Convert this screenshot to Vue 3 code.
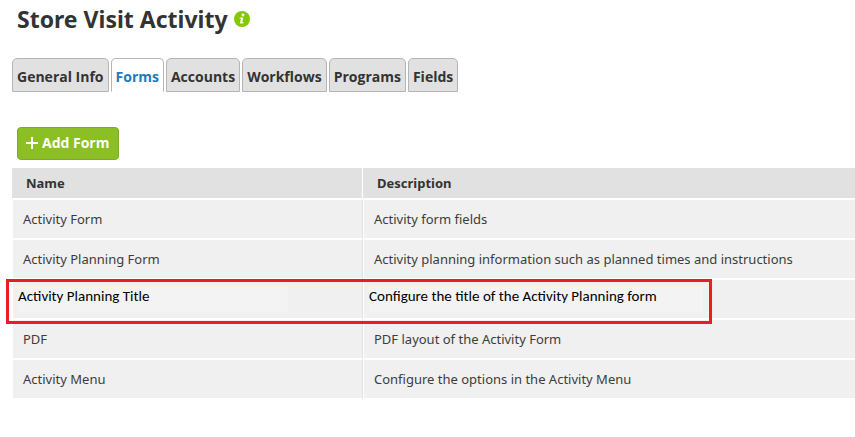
<script setup>
import { ref } from 'vue'

const tabs = ['General Info', 'Forms', 'Accounts', 'Workflows', 'Programs', 'Fields']
const activeTab = ref('Forms')

const forms = [
  { name: 'Activity Form', description: 'Activity form fields' },
  { name: 'Activity Planning Form', description: 'Activity planning information such as planned times and instructions' },
  { name: 'Activity Planning Title', description: 'Configure the title of the Activity Planning form', highlighted: true },
  { name: 'PDF', description: 'PDF layout of the Activity Form' },
  { name: 'Activity Menu', description: 'Configure the options in the Activity Menu' },
]
</script>

<template>
  <main class="page">
    <header class="title-bar">
      <h1>Store Visit Activity</h1>
      <svg class="info" viewBox="0 0 16 16" aria-hidden="true">
        <circle cx="8" cy="8" r="8" fill="#84c900" />
        <circle cx="9" cy="4" r="1.4" fill="#fff" />
        <path d="M5.9 6.5H9.4L8.3 11.1L9.5 11L9.3 12.4H5.8L7 7.8L5.7 7.7Z" fill="#fff" />
      </svg>
    </header>

    <nav class="tabs">
      <button
        v-for="tab in tabs"
        :key="tab"
        type="button"
        class="tab"
        :class="{ active: tab === activeTab }"
        @click="activeTab = tab"
      >{{ tab }}</button>
    </nav>

    <button type="button" class="add">
      <svg class="plus" viewBox="0 0 12 12" aria-hidden="true">
        <path d="M6 0V12M0 6H12" stroke="#fff" stroke-width="2" />
      </svg>
      <span>Add Form</span>
    </button>

    <table class="forms">
      <thead>
        <tr>
          <th class="name-col" scope="col">Name</th>
          <th scope="col">Description</th>
        </tr>
      </thead>
      <tbody>
        <tr v-for="form in forms" :key="form.name" :class="{ highlighted: form.highlighted }">
          <td><span class="text">{{ form.name }}</span></td>
          <td><span class="text">{{ form.description }}</span></td>
        </tr>
      </tbody>
    </table>
  </main>
</template>

<style>
body {
  margin: 0;
  background: #fff;
}
</style>

<style scoped>
.page {
  padding: 3px 0 36px 12px;
  font-family: "Noto Sans", "Open Sans", sans-serif;
  font-size: 13px;
  color: #333;
}

.title-bar {
  display: flex;
  align-items: center;
  gap: 6px;
  padding-left: 5px;
}

h1 {
  margin: 0;
  font-size: 23px;
  line-height: 32px;
  font-weight: 700;
}

.info {
  width: 16px;
  height: 16px;
}

.tabs {
  display: flex;
  gap: 2px;
  margin-top: 23px;
}

.tab {
  box-sizing: border-box;
  height: 34px;
  padding: 2px 4px 0;
  border: 1px solid #b5b5b5;
  border-radius: 5px 5px 0 0;
  background: #e1e1e1;
  color: #333;
  font-family: "Open Sans", sans-serif;
  font-size: 14px;
  font-weight: 700;
  white-space: nowrap;
}

.tab.active {
  border-bottom-color: #fff;
  background: #fff;
  color: #1f7ab8;
}

.add {
  display: flex;
  align-items: center;
  gap: 4px;
  box-sizing: border-box;
  height: 33px;
  margin: 35px 0 8px 5px;
  padding: 0 9px 2px 8px;
  border: 1px solid #7caa22;
  border-radius: 4px;
  background: #8cbf26;
  color: #fff;
  font-family: "Open Sans", sans-serif;
  font-size: 14px;
  font-weight: 700;
}

.plus {
  width: 12px;
  height: 12px;
}

.forms {
  width: 100%;
  table-layout: fixed;
  border-spacing: 0;
}

.name-col {
  width: 351px;
}

th,
td {
  box-sizing: border-box;
  border-bottom: 2px solid #fff;
  text-align: left;
}

th {
  height: 32px;
  padding: 0 14px;
  background: #e1e1e1;
}

th:first-child {
  border-right: 1px solid #fff;
}

td {
  height: 40px;
  padding: 0 10px;
  border-left: 1px solid #fff;
  background: #f0f0f0;
  color: #3c3c3c;
}

td:first-child {
  border-right: 1px solid #e1e1e1;
}

.highlighted td {
  padding: 0 5px;
}

.highlighted td:first-child {
  position: relative;
}

.highlighted td:first-child::after {
  content: "";
  position: absolute;
  z-index: 1;
  top: -1px;
  left: -7px;
  box-sizing: border-box;
  width: 706px;
  height: 45px;
  border: 3px solid #ed1c24;
  pointer-events: none;
}

.highlighted .text {
  display: block;
  max-width: 334px;
  padding-bottom: 6px;
  background: #f3f3f3;
  color: #000;
  font-family: Calibri, Carlito, Lato, sans-serif;
  font-size: 15px;
  line-height: 20px;
}

.highlighted td:first-child .text {
  max-width: 270px;
}
</style>
